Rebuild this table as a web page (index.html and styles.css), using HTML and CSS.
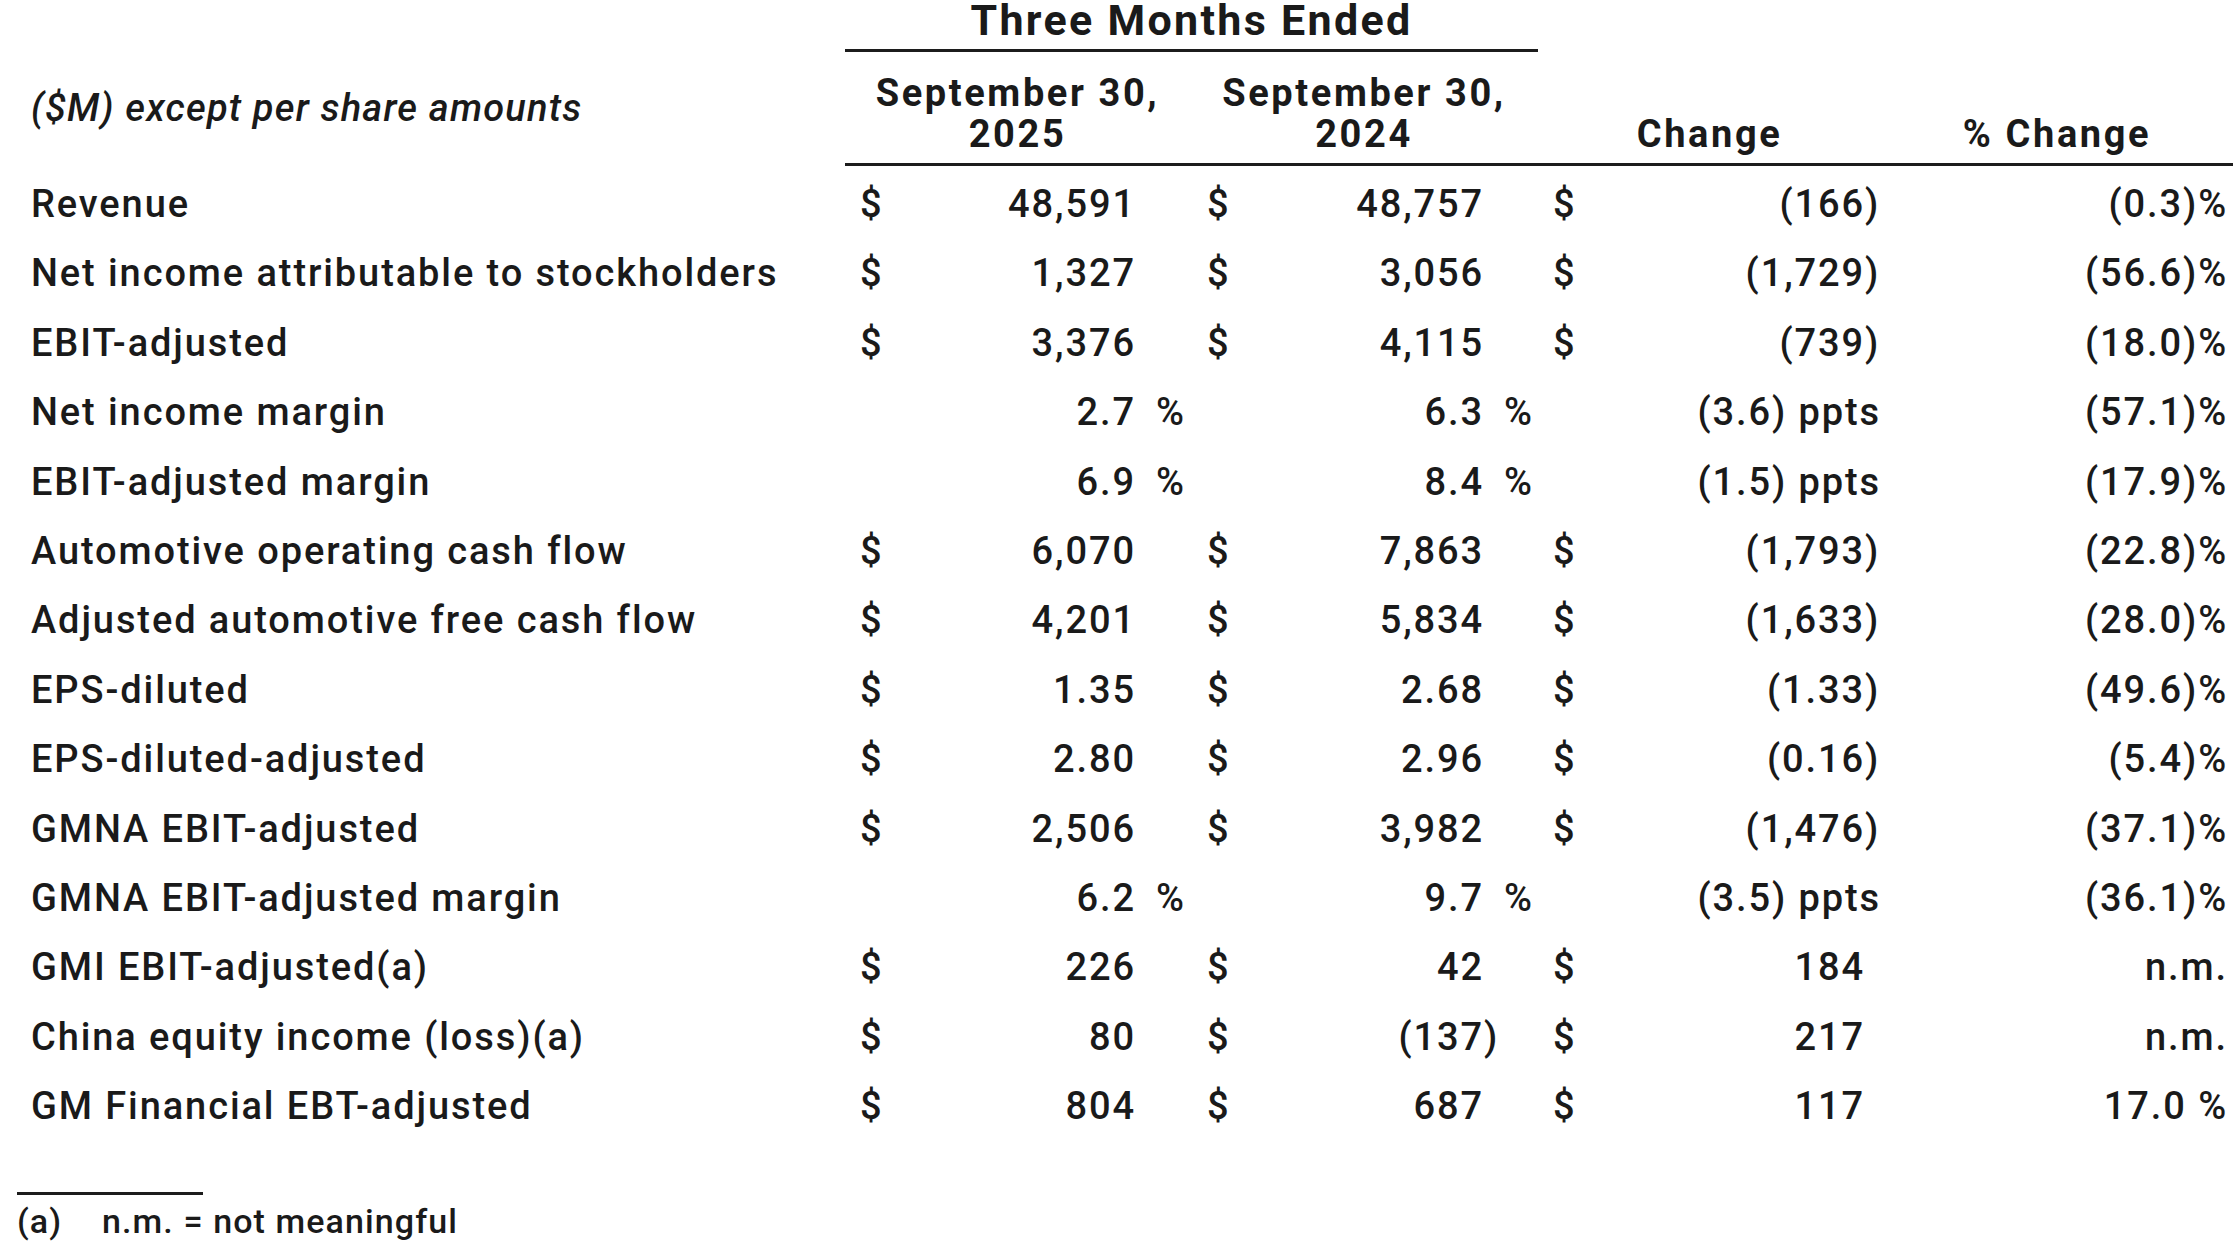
FILE: index.html
```html
<!DOCTYPE html>
<html lang="en">
<head>
<meta charset="utf-8">
<title>Financial Highlights</title>
<link rel="stylesheet" href="styles.css">
</head>
<body>
<main class="page">
  <table class="fin">
    <colgroup>
      <col class="c-label">
      <col class="c-dol1"><col class="c-val1">
      <col class="c-dol2"><col class="c-val2">
      <col class="c-dol3"><col class="c-val3">
      <col class="c-pct">
    </colgroup>
    <thead>
      <tr class="hdr-a">
        <th></th>
        <th colspan="4" class="ruled title">Three Months Ended</th>
        <th></th><th></th><th></th>
      </tr>
      <tr class="hdr-b">
        <th class="unit">($M) except per share amounts</th>
        <th colspan="2" class="ruled period p1">September 30,<br>2025</th>
        <th colspan="2" class="ruled period p2">September 30,<br>2024</th>
        <th colspan="2" class="ruled low">Change</th>
        <th class="ruled low">% Change</th>
      </tr>
    </thead>
    <tbody>
      <tr>
        <td class="lbl">Revenue</td>
        <td class="dol d1">$</td><td class="v v1"><span>48,591</span><span class="sfx"></span></td>
        <td class="dol d2">$</td><td class="v v2"><span>48,757</span><span class="sfx"></span></td>
        <td class="dol d3">$</td><td class="v v3"><span>(166</span><span class="sfx">)</span></td>
        <td class="pct">(0.3)%</td>
      </tr>
      <tr>
        <td class="lbl">Net income attributable to stockholders</td>
        <td class="dol d1">$</td><td class="v v1"><span>1,327</span><span class="sfx"></span></td>
        <td class="dol d2">$</td><td class="v v2"><span>3,056</span><span class="sfx"></span></td>
        <td class="dol d3">$</td><td class="v v3"><span>(1,729</span><span class="sfx">)</span></td>
        <td class="pct">(56.6)%</td>
      </tr>
      <tr>
        <td class="lbl">EBIT-adjusted</td>
        <td class="dol d1">$</td><td class="v v1"><span>3,376</span><span class="sfx"></span></td>
        <td class="dol d2">$</td><td class="v v2"><span>4,115</span><span class="sfx"></span></td>
        <td class="dol d3">$</td><td class="v v3"><span>(739</span><span class="sfx">)</span></td>
        <td class="pct">(18.0)%</td>
      </tr>
      <tr>
        <td class="lbl">Net income margin</td>
        <td class="dol d1"></td><td class="v v1"><span>2.7</span><span class="sfx pc">%</span></td>
        <td class="dol d2"></td><td class="v v2"><span>6.3</span><span class="sfx pc">%</span></td>
        <td class="dol d3"></td><td class="v v3"><span>(3.6) ppts</span></td>
        <td class="pct">(57.1)%</td>
      </tr>
      <tr>
        <td class="lbl">EBIT-adjusted margin</td>
        <td class="dol d1"></td><td class="v v1"><span>6.9</span><span class="sfx pc">%</span></td>
        <td class="dol d2"></td><td class="v v2"><span>8.4</span><span class="sfx pc">%</span></td>
        <td class="dol d3"></td><td class="v v3"><span>(1.5) ppts</span></td>
        <td class="pct">(17.9)%</td>
      </tr>
      <tr>
        <td class="lbl">Automotive operating cash flow</td>
        <td class="dol d1">$</td><td class="v v1"><span>6,070</span><span class="sfx"></span></td>
        <td class="dol d2">$</td><td class="v v2"><span>7,863</span><span class="sfx"></span></td>
        <td class="dol d3">$</td><td class="v v3"><span>(1,793</span><span class="sfx">)</span></td>
        <td class="pct">(22.8)%</td>
      </tr>
      <tr>
        <td class="lbl">Adjusted automotive free cash flow</td>
        <td class="dol d1">$</td><td class="v v1"><span>4,201</span><span class="sfx"></span></td>
        <td class="dol d2">$</td><td class="v v2"><span>5,834</span><span class="sfx"></span></td>
        <td class="dol d3">$</td><td class="v v3"><span>(1,633</span><span class="sfx">)</span></td>
        <td class="pct">(28.0)%</td>
      </tr>
      <tr>
        <td class="lbl">EPS-diluted</td>
        <td class="dol d1">$</td><td class="v v1"><span>1.35</span><span class="sfx"></span></td>
        <td class="dol d2">$</td><td class="v v2"><span>2.68</span><span class="sfx"></span></td>
        <td class="dol d3">$</td><td class="v v3"><span>(1.33</span><span class="sfx">)</span></td>
        <td class="pct">(49.6)%</td>
      </tr>
      <tr>
        <td class="lbl">EPS-diluted-adjusted</td>
        <td class="dol d1">$</td><td class="v v1"><span>2.80</span><span class="sfx"></span></td>
        <td class="dol d2">$</td><td class="v v2"><span>2.96</span><span class="sfx"></span></td>
        <td class="dol d3">$</td><td class="v v3"><span>(0.16</span><span class="sfx">)</span></td>
        <td class="pct">(5.4)%</td>
      </tr>
      <tr>
        <td class="lbl">GMNA EBIT-adjusted</td>
        <td class="dol d1">$</td><td class="v v1"><span>2,506</span><span class="sfx"></span></td>
        <td class="dol d2">$</td><td class="v v2"><span>3,982</span><span class="sfx"></span></td>
        <td class="dol d3">$</td><td class="v v3"><span>(1,476</span><span class="sfx">)</span></td>
        <td class="pct">(37.1)%</td>
      </tr>
      <tr>
        <td class="lbl">GMNA EBIT-adjusted margin</td>
        <td class="dol d1"></td><td class="v v1"><span>6.2</span><span class="sfx pc">%</span></td>
        <td class="dol d2"></td><td class="v v2"><span>9.7</span><span class="sfx pc">%</span></td>
        <td class="dol d3"></td><td class="v v3"><span>(3.5) ppts</span></td>
        <td class="pct">(36.1)%</td>
      </tr>
      <tr>
        <td class="lbl">GMI EBIT-adjusted(a)</td>
        <td class="dol d1">$</td><td class="v v1"><span>226</span><span class="sfx"></span></td>
        <td class="dol d2">$</td><td class="v v2"><span>42</span><span class="sfx"></span></td>
        <td class="dol d3">$</td><td class="v v3"><span>184</span><span class="sfx"></span></td>
        <td class="pct">n.m.</td>
      </tr>
      <tr>
        <td class="lbl">China equity income (loss)(a)</td>
        <td class="dol d1">$</td><td class="v v1"><span>80</span><span class="sfx"></span></td>
        <td class="dol d2">$</td><td class="v v2"><span>(137</span><span class="sfx">)</span></td>
        <td class="dol d3">$</td><td class="v v3"><span>217</span><span class="sfx"></span></td>
        <td class="pct">n.m.</td>
      </tr>
      <tr>
        <td class="lbl">GM Financial EBT-adjusted</td>
        <td class="dol d1">$</td><td class="v v1"><span>804</span><span class="sfx"></span></td>
        <td class="dol d2">$</td><td class="v v2"><span>687</span><span class="sfx"></span></td>
        <td class="dol d3">$</td><td class="v v3"><span>117</span><span class="sfx"></span></td>
        <td class="pct">17.0 %</td>
      </tr>
    </tbody>
  </table>

  <footer class="notes">
    <div class="note-rule"></div>
    <p class="note"><span class="note-key">(a)</span>n.m. = not meaningful</p>
  </footer>
</main>
</body>
</html>
```

FILE: styles.css
```css
html, body {
  margin: 0;
  padding: 0;
  background: #ffffff;
}

body {
  font-family: Roboto, "Liberation Sans", sans-serif;
  color: #1a1a1a;
  font-size: 38px;
  font-weight: 500;
  letter-spacing: 1.9px;
}

.page {
  padding-left: 17px;
  width: 2216px;
}

.fin {
  table-layout: fixed;
  border-collapse: separate;
  border-spacing: 0;
  width: 2216px;
}

.c-label { width: 828px; }
.c-dol1 { width: 60px; }
.c-val1 { width: 285px; }
.c-dol2 { width: 60px; }
.c-val2 { width: 288px; }
.c-dol3 { width: 60px; }
.c-val3 { width: 283px; }
.c-pct { width: 352px; }

th, td {
  padding: 0;
  white-space: nowrap;
}

th {
  font-weight: 700;
  text-align: center;
  letter-spacing: 2.6px;
}

.ruled {
  border-bottom: 3px solid #1c1c1c;
}

.hdr-a th {
  line-height: 36px;
  padding-top: 2px;
  padding-bottom: 11px;
  vertical-align: top;
}

.hdr-a th.title {
  font-size: 43px;
  letter-spacing: 2.3px;
}

.hdr-b th {
  line-height: 41px;
  padding-top: 21px;
  padding-bottom: 8px;
  vertical-align: bottom;
}

.hdr-b th.unit {
  font-weight: 500;
  font-style: italic;
  letter-spacing: 1.2px;
  text-align: left;
  vertical-align: top;
  padding-top: 36px;
  padding-left: 14px;
}

.hdr-b th.period { vertical-align: top; }

tbody td {
  line-height: 69.4px;
  vertical-align: top;
}

tbody tr:first-child td {
  padding-top: 4px;
}

.lbl {
  padding-left: 14px;
  text-align: left;
}

.dol {
  text-align: left;
}

.d1 { padding-left: 15px; }
.d2 { padding-left: 17px; }
.d3 { padding-left: 15px; }

.v {
  text-align: right;
}

.sfx {
  display: inline-block;
  text-align: left;
}

.v1 .sfx, .v2 .sfx { width: 54px; }
.v3 .sfx { width: 16px; }

.sfx.pc { padding-left: 20px; box-sizing: border-box; }

.pct {
  text-align: right;
  padding-right: 5px;
}

.notes {
  margin-top: 50px;
}

.note-rule {
  width: 186px;
  height: 3px;
  background: #1c1c1c;
}

.note {
  margin: 6px 0 0 0;
  font-size: 34px;
  line-height: 40px;
  letter-spacing: 1.1px;
}

.note-key {
  display: inline-block;
  width: 85px;
}
```
